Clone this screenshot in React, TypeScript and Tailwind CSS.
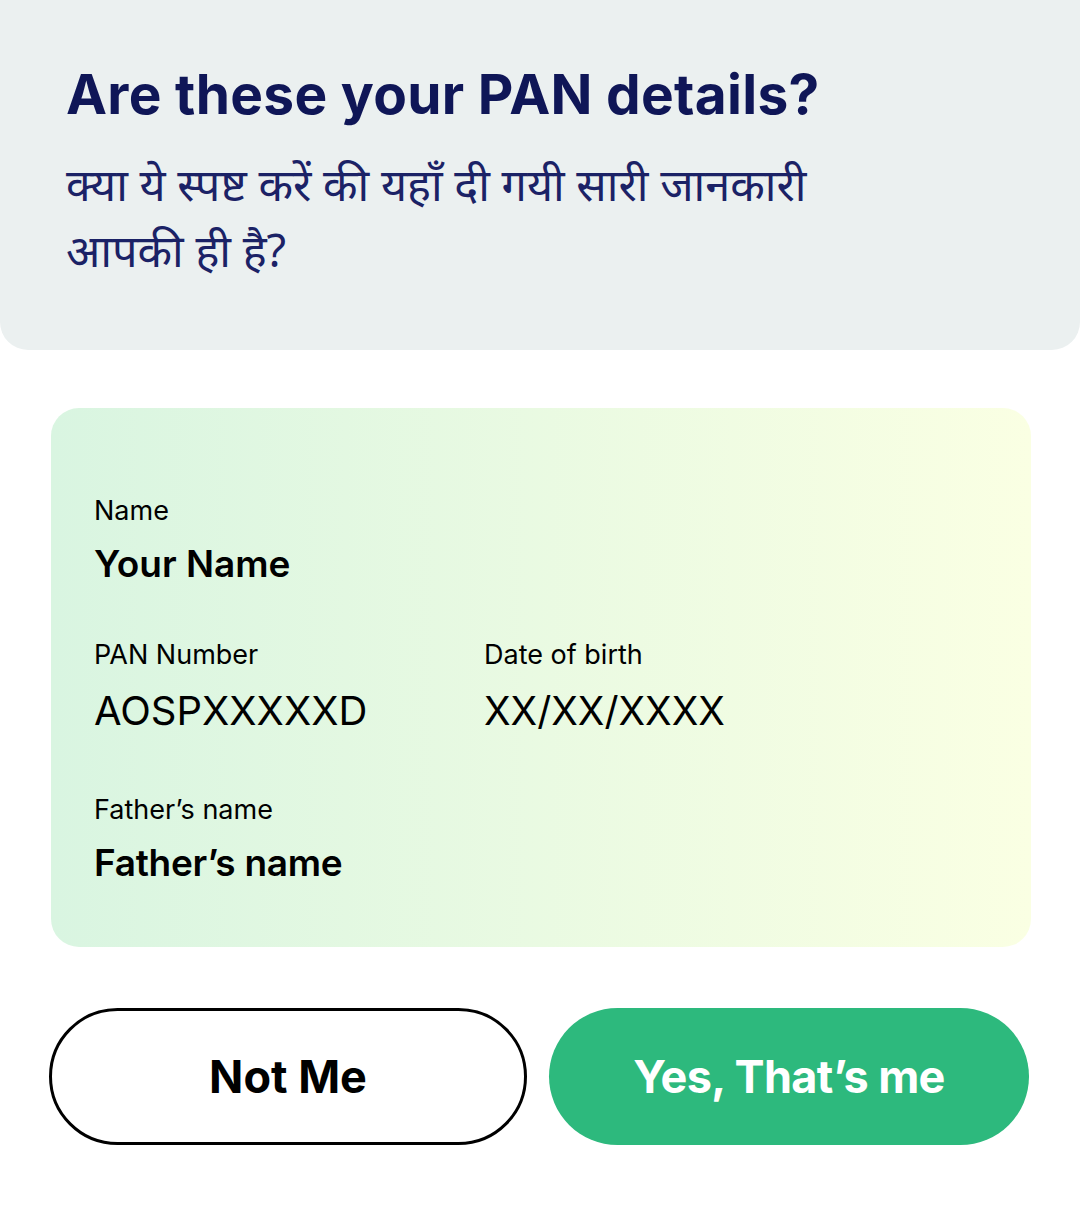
export default function App() {
  return (
    <div className="min-h-[1209px] w-[1080px] bg-white font-['Inter',sans-serif]">
      <div className="h-[350px] rounded-b-[28px] bg-[#EBF0F0] px-[66px] pt-[62px]">
        <h1 className="text-[55px] font-bold leading-[64px] tracking-[0.3px] text-[#0F1657]">
          Are these your PAN details?
        </h1>
        <p className="mt-[25px] w-[800px] font-['Noto_Sans',sans-serif] text-[45px] leading-[66px] text-[#1B2266]">
          क्या ये स्पष्ट करें की यहाँ दी गयी सारी जानकारी आपकी ही है?
        </p>
      </div>

      <div className="ml-[51px] mt-[58px] h-[539px] w-[980px] rounded-[28px] bg-gradient-to-r from-[#D9F5E1] to-[#FAFFE3] px-[43px] pt-[86px] text-black">
        <div>
          <div className="text-[27px] leading-[34px]">Name</div>
          <div className="mt-[14px] text-[37px] font-semibold leading-[44px]">Your Name</div>
        </div>
        <div className="mt-[52px] flex">
          <div className="w-[390px]">
            <div className="text-[27px] leading-[34px]">PAN Number</div>
            <div className="mt-[17px] text-[40px] leading-[44px]">AOSPXXXXXD</div>
          </div>
          <div>
            <div className="text-[27px] leading-[34px]">Date of birth</div>
            <div className="mt-[17px] text-[39px] leading-[44px]">XX/XX/XXXX</div>
          </div>
        </div>
        <div className="mt-[60px]">
          <div className="text-[27px] leading-[34px]">Father’s name</div>
          <div className="mt-[14px] text-[37px] font-semibold leading-[44px] tracking-[-0.3px]">Father’s name</div>
        </div>
      </div>

      <div className="ml-[49px] mt-[61px] flex gap-[22px]">
        <button className="h-[137px] w-[478px] rounded-full border-[3px] border-black bg-white text-[45px] font-bold text-black">
          Not Me
        </button>
        <button className="h-[137px] w-[480px] rounded-full bg-[#2DB97D] text-[45px] font-bold tracking-[-0.6px] text-white">
          Yes, That’s me
        </button>
      </div>
    </div>
  );
}
